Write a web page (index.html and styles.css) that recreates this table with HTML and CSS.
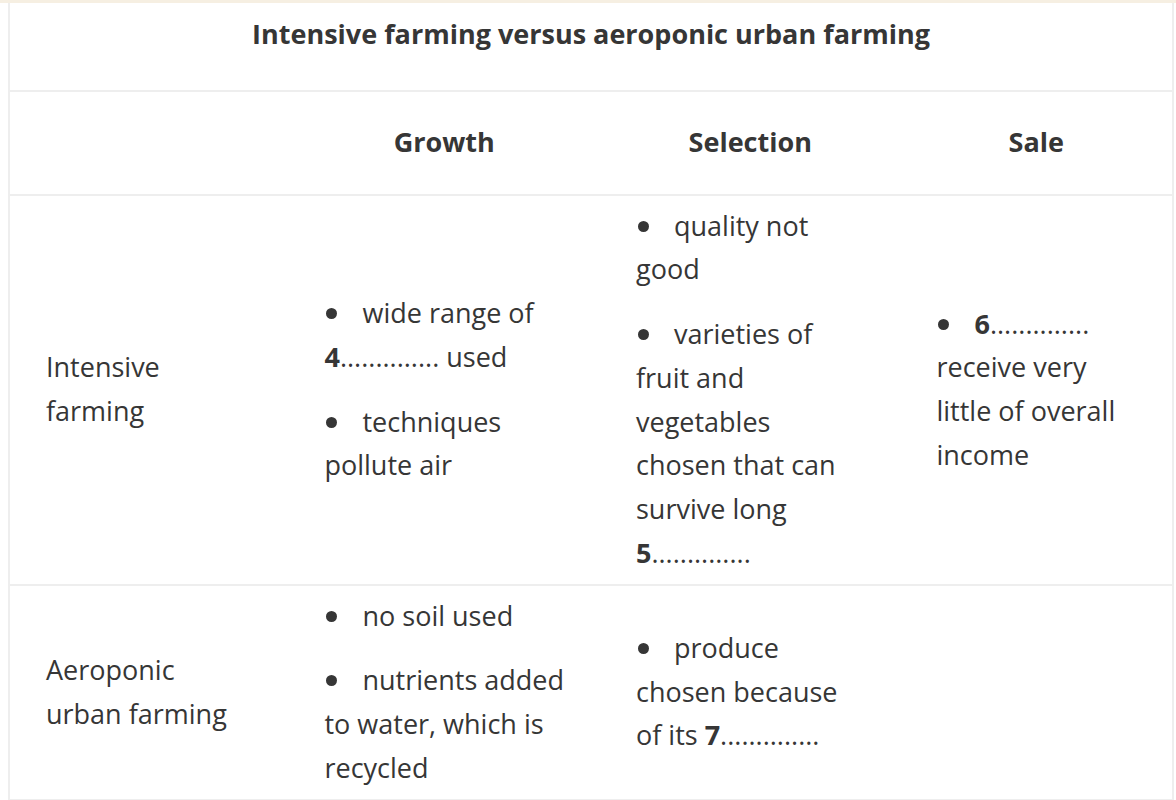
FILE: index.html
```html
<!DOCTYPE html>
<html lang="en">
<head>
<meta charset="utf-8">
<title>Intensive farming versus aeroponic urban farming</title>
<link rel="stylesheet" href="styles.css">
</head>
<body>
<div class="topbar"></div>
<table class="compare">
  <colgroup>
    <col class="c1"><col class="c2"><col class="c3"><col class="c4">
  </colgroup>
  <thead>
    <tr class="title-row">
      <th colspan="4">Intensive farming versus aeroponic urban farming</th>
    </tr>
    <tr class="head-row">
      <th></th>
      <th>Growth</th>
      <th>Selection</th>
      <th>Sale</th>
    </tr>
  </thead>
  <tbody>
    <tr>
      <td>Intensive farming</td>
      <td class="growth">
        <p><span class="dot"></span>wide range of <b>4</b>.............. used</p>
        <p><span class="dot"></span>techniques pollute air</p>
      </td>
      <td>
        <p><span class="dot"></span>quality not good</p>
        <p><span class="dot"></span>varieties of fruit and vegetables chosen that can survive long <b>5</b>..............</p>
      </td>
      <td>
        <p><span class="dot"></span><b>6</b>.............. receive very little of overall income</p>
      </td>
    </tr>
    <tr>
      <td>Aeroponic urban farming</td>
      <td class="growth">
        <p><span class="dot"></span>no soil used</p>
        <p><span class="dot"></span>nutrients added to water, which is recycled</p>
      </td>
      <td>
        <p><span class="dot"></span>produce chosen because of its <b>7</b>..............</p>
      </td>
      <td></td>
    </tr>
  </tbody>
</table>
</body>
</html>
```
FILE: styles.css
```css
html, body {
  margin: 0;
  padding: 0;
  background: #ffffff;
}
body {
  font-family: "Open Sans", "Liberation Sans", sans-serif;
  color: #363636;
  font-size: 27px;
  line-height: 43.75px;
}
.topbar {
  height: 3px;
  background: #f6efe2;
}
.compare {
  margin-left: 8px;
  width: 1166px;
  table-layout: fixed;
  border-collapse: collapse;
  border-left: 2px solid #eeeeee;
  border-right: 2px solid #eeeeee;
  border-bottom: 2px solid #eeeeee;
}
.c1 { width: 279px; }
.c2 { width: 311px; }
.c3 { width: 300px; }
.c4 { width: 272px; }
.compare th,
.compare td {
  padding: 8px 36px 9px;
  vertical-align: middle;
  text-align: left;
  font-weight: 400;
}
.compare td.growth {
  padding-right: 28px;
}
.compare tbody tr td,
.head-row th {
  border-top: 2px solid #eeeeee;
}
.title-row th {
  text-align: center;
  font-weight: 700;
  padding: 9px 36px 34px;
}
.head-row th {
  text-align: center;
  font-weight: 700;
  padding: 28px 36px 30px;
}
.compare p {
  margin: 0 0 21px;
}
.compare p:last-child {
  margin-bottom: 0;
}
.compare b {
  font-weight: 700;
}
.dot {
  display: inline-block;
  width: 11px;
  height: 11px;
  border-radius: 50%;
  background: #363636;
  margin: 0 25px 0 2px;
  vertical-align: 4px;
}
```
